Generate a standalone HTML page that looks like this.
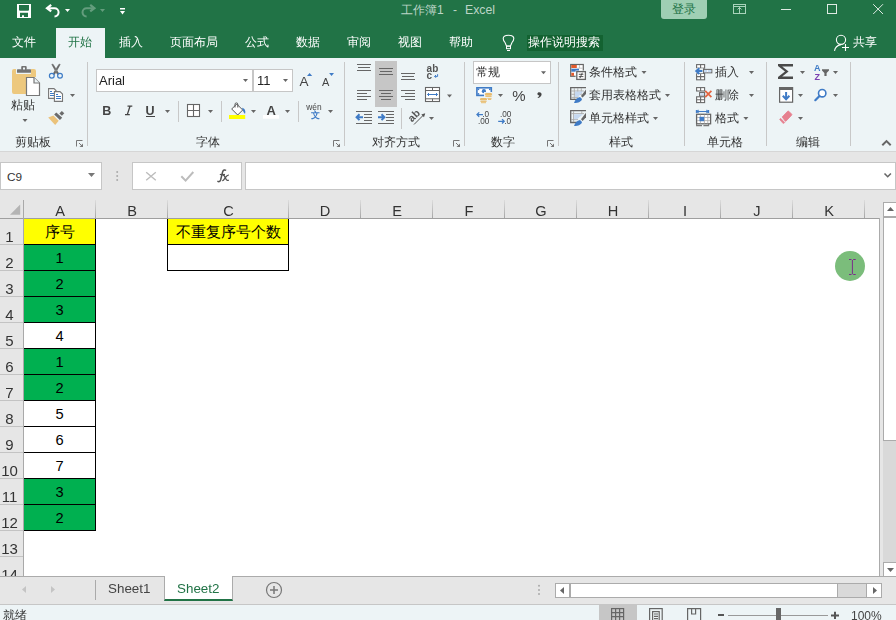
<!DOCTYPE html>
<html><head><meta charset="utf-8">
<style>
*{box-sizing:border-box;margin:0;padding:0}
html,body{width:896px;height:620px;overflow:hidden;background:#fff;font-family:"Liberation Sans",sans-serif;}
.a{position:absolute;white-space:nowrap}
svg{position:absolute;overflow:visible}
#title{left:0;top:0;width:896px;height:58px;background:#217346}
#ribbon{left:0;top:58px;width:896px;height:94px;background:#edf4f6;border-bottom:1px solid #d6d6d6}
#fbar{left:0;top:152px;width:896px;height:48px;background:#e6e6e6}
.tab{color:#fff;font-size:12px;top:35px;line-height:14px;font-weight:500;will-change:transform}
.gl{font-size:12px;color:#333;top:135px;line-height:14px;font-weight:500;will-change:transform}
.rt{font-size:12px;color:#333;line-height:14px;font-weight:500;will-change:transform}
.sep{width:1px;background:#c8c8c8}
.dd{width:0;height:0;border-left:2.5px solid transparent;border-right:2.5px solid transparent;border-top:3px solid #666}
.ch{top:202px;height:18px;font-size:14.6px;color:#333;text-align:center;line-height:18px}
.sepg{top:200px;width:1px;height:18px;background:linear-gradient(#dcdcdc,#a6a6a6)}
.rh{left:0;width:19px;font-size:15px;line-height:18px;color:#333;text-align:center}
.cell{font-size:14.67px;color:#000;text-align:center;line-height:26px}
</style></head><body>
<!-- TITLE BAR -->
<div id="title" class="a"></div>
<div class="a" style="left:56px;top:28px;width:49px;height:30px;background:#edf4f6"></div>
<div class="a tab" style="left:12px">文件</div>
<div class="a tab" style="left:68px;color:#217346">开始</div>
<div class="a tab" style="left:119px">插入</div>
<div class="a tab" style="left:170px">页面布局</div>
<div class="a tab" style="left:245px">公式</div>
<div class="a tab" style="left:296px">数据</div>
<div class="a tab" style="left:347px">审阅</div>
<div class="a tab" style="left:398px">视图</div>
<div class="a tab" style="left:449px">帮助</div>
<div class="a" style="left:527px;top:35px;width:76px;height:16px;background:#136231"></div>
<div class="a tab" style="left:528px">操作说明搜索</div>
<div class="a tab" style="left:853px">共享</div>
<div class="a" style="left:401px;top:3px;font-size:12px;line-height:14px;color:#bcd5c6">工作簿1</div>
<div class="a" style="left:453px;top:3px;font-size:12px;line-height:14px;color:#bcd5c6">-</div>
<div class="a" style="left:465px;top:3px;font-size:12.3px;line-height:14px;color:#bcd5c6">Excel</div>
<div class="a" style="left:661px;top:0;width:46px;height:19px;background:#9fcfb4;border-radius:0 0 3px 3px"></div>
<div class="a" style="left:672px;top:2px;font-size:12px;line-height:14px;color:#217346">登录</div>


<svg class="a" style="left:0;top:0" width="896" height="620" viewBox="0 0 896 620">
<!-- save -->
<rect x="17" y="4" width="14" height="14" fill="#fff"/>
<path d="M19 5 H29 V10 L28.3 10.7 H19.7 L19 10 Z" fill="#217346"/>
<path d="M20 12.7 H28 V16.9 H24 V15.2 H22 V16.9 H20 Z" fill="#217346"/>
<!-- undo -->
<path d="M51.2 4.9 L47 8.2 L51.2 11.4" fill="none" stroke="#fff" stroke-width="2.2" stroke-linejoin="miter"/>
<path d="M47.5 8.2 H54.5 A4.1 4.1 0 0 1 54.5 16.4" fill="none" stroke="#fff" stroke-width="2"/>
<path d="M65 9 H70 L67.5 12 Z" fill="#fff"/>
<!-- redo -->
<g opacity="0.3">
<path d="M90.2 4.9 L94.4 8.2 L90.2 11.4" fill="none" stroke="#fff" stroke-width="2.2"/>
<path d="M94 8.2 H86.6 A4.1 4.1 0 0 0 86.6 16.4" fill="none" stroke="#fff" stroke-width="2"/>
<path d="M100 9 H105 L102.5 12 Z" fill="#fff"/>
</g>
<!-- qat -->
<rect x="120" y="8" width="5" height="1.5" fill="#fff"/>
<path d="M120 11 H125 L122.5 14.4 Z" fill="#fff"/>
<!-- ribbon display -->
<g fill="none" stroke="#a9d4bb" stroke-width="1">
<rect x="733.5" y="4.5" width="12" height="9"/>
<path d="M733.5 6.5 H745.5 M739.5 7 V13.5 M737.5 9.5 L739.5 7.5 L741.5 9.5"/>
</g>
<!-- min max close -->
<rect x="781" y="9" width="10" height="1" fill="#dfeae3"/>
<rect x="827.5" y="4.5" width="9" height="9" fill="none" stroke="#dfeae3" stroke-width="1"/>
<path d="M873.2 4.2 L883 14 M883 4.2 L873.2 14" stroke="#dfeae3" stroke-width="1"/>
<!-- lightbulb -->
<path d="M506.5 46 L505 42.5 C503.8 41.2 503.2 39.8 503.2 38.6 C503.2 36.6 505.5 35.3 508.5 35.3 C511.5 35.3 513.8 36.6 513.8 38.6 C513.8 39.8 513.2 41.2 512 42.5 L510.5 46 Z" fill="none" stroke="#fff" stroke-width="1.1"/>
<rect x="506.5" y="46.2" width="4" height="2.5" fill="none" stroke="#fff" stroke-width="1"/>
<rect x="507" y="50" width="3" height="1" fill="#fff"/>
<!-- share person -->
<circle cx="841" cy="39.8" r="4.6" fill="none" stroke="#fff" stroke-width="1.1"/>
<path d="M834.5 50.8 C835 47.5 837.5 45.2 841 44.6" fill="none" stroke="#fff" stroke-width="1.1"/>
<path d="M842 47.5 H849 M845.5 44 V51" stroke="#fff" stroke-width="1.1"/>
</svg>

<!-- RIBBON -->
<div id="ribbon" class="a"></div>
<div class="a gl" style="left:15px">剪贴板</div>
<div class="a gl" style="left:196px">字体</div>
<div class="a gl" style="left:372px">对齐方式</div>
<div class="a gl" style="left:491px">数字</div>
<div class="a gl" style="left:609px">样式</div>
<div class="a gl" style="left:707px">单元格</div>
<div class="a gl" style="left:796px">编辑</div>
<div class="a sep" style="left:87px;top:62px;height:84px"></div>
<div class="a sep" style="left:344px;top:62px;height:84px"></div>
<div class="a sep" style="left:464px;top:62px;height:84px"></div>
<div class="a sep" style="left:558px;top:62px;height:84px"></div>
<div class="a sep" style="left:684px;top:62px;height:84px"></div>
<div class="a sep" style="left:766px;top:62px;height:84px"></div>
<div class="a sep" style="left:850px;top:62px;height:84px"></div>
<div class="a rt" style="left:11px;top:98px">粘贴</div>
<div class="a rt" style="left:589px;top:65px">条件格式</div>
<div class="a rt" style="left:589px;top:88px">套用表格格式</div>
<div class="a rt" style="left:589px;top:111px">单元格样式</div>
<div class="a rt" style="left:715px;top:65px">插入</div>
<div class="a rt" style="left:715px;top:88px">删除</div>
<div class="a rt" style="left:715px;top:111px">格式</div>
<!-- font box -->
<div class="a" style="left:96px;top:69px;width:157px;height:23px;background:#fff;border:1px solid #c6c6c6"></div>
<div class="a" style="left:253px;top:69px;width:40px;height:23px;background:#fff;border:1px solid #c6c6c6"></div>
<div class="a" style="left:99px;top:73px;font-size:13px;line-height:15px;color:#222">Arial</div>
<div class="a" style="left:257px;top:73px;font-size:13px;line-height:15px;color:#222">11</div>
<!-- number box -->
<div class="a" style="left:473px;top:61px;width:78px;height:23px;background:#fff;border:1px solid #c6c6c6"></div>
<div class="a rt" style="left:476px;top:65px">常规</div>


<svg class="a" style="left:0;top:0" width="896" height="620" viewBox="0 0 896 620">
<defs>
<path id="dd" d="M0 0 H5 L2.5 3 Z" fill="#666"/>
<g id="launch"><path d="M0.5 6.5 V0.5 H6.5" fill="none" stroke="#777" stroke-width="1"/><path d="M3 3 L6 6" stroke="#777" stroke-width="1"/><path d="M7 3.5 V7 H3.5 Z" fill="#777"/></g>
</defs>
<!-- paste -->
<path d="M14 69 H16 V74 H31 V69 H34 A2 2 0 0 1 36 71 V77 H26 V94 H14 A2 2 0 0 1 12 92 V71 A2 2 0 0 1 14 69Z" fill="#edc87e"/>
<rect x="17" y="69.2" width="14" height="3.6" rx="0.6" fill="#737373"/>
<rect x="21.2" y="66" width="5.5" height="4" rx="1" fill="#737373"/>
<rect x="23" y="67.5" width="2" height="2" fill="#edf4f6"/>
<path d="M26.5 77.5 H34 L39.5 83 V95.5 H26.5 Z" fill="#fff" stroke="#777" stroke-width="1.2"/>
<path d="M34 77.5 V83 H39.5" fill="#edf4f6" stroke="#777" stroke-width="1.2"/>
<use href="#dd" x="22.5" y="119"/>
<!-- cut -->
<path d="M51.8 64.4 L53 64.2 L58.8 73.6 L57.4 74.4 Z M60.2 64.4 L59 64.2 L53.2 73.6 L54.6 74.4 Z" fill="#666" stroke="#666" stroke-width="0.6"/>
<circle cx="51.8" cy="75.8" r="2.4" fill="none" stroke="#3d7bc6" stroke-width="1.2"/>
<circle cx="60" cy="75.8" r="2.4" fill="none" stroke="#3d7bc6" stroke-width="1.2"/>
<!-- copy -->
<path d="M48.6 88.6 H54 L56 90.6 V98.4 H48.6 Z" fill="#fff" stroke="#777" stroke-width="1.1"/>
<path d="M50 91.5 H52 M50 93.5 H54 M50 95.5 H54" stroke="#3d7bc6" stroke-width="1"/>
<path d="M54.4 91.6 H60 L62.5 94 V101.4 H54.4 Z" fill="#fff" stroke="#777" stroke-width="1.1"/>
<path d="M56 94.5 H58 M56 96.5 H61 M56 98.5 H61" stroke="#3d7bc6" stroke-width="1"/>
<use href="#dd" x="70" y="94"/>
<!-- format painter -->
<path d="M48.2 117.5 L53.4 115.4 L58.7 120.7 L55.2 125 Z" fill="#ebc27a"/>
<path d="M54.2 114.5 L56.3 112.5 L62.2 117.8 L59.9 119.9 Z" fill="#6b6b6b"/>
<path d="M59.4 113.5 L61.8 110.9 L64.3 113.2 L61.9 115.7 Z" fill="#6b6b6b"/>

<use href="#launch" x="76" y="140"/>

<!-- font group -->
<use href="#dd" x="243" y="79"/>
<use href="#dd" x="283" y="79"/>
<text x="299.4" y="85.8" font-family="Liberation Sans" font-size="13.5" fill="#444">A</text>
<path d="M307 76 L309.6 73 L312.2 76 Z" fill="#3f7bc6"/>
<text x="322" y="85.8" font-family="Liberation Sans" font-size="11" fill="#444">A</text>
<path d="M329.1 73 H334 L331.55 76 Z" fill="#3f7bc6"/>
<text x="102.3" y="115" font-family="Liberation Sans" font-size="12.5" font-weight="bold" fill="#444">B</text>
<path d="M127.5 106.2 H132.3 M125 114.6 H129.8 M130 106.2 L127.3 114.6" stroke="#444" stroke-width="1.3" fill="none"/>
<text x="145.6" y="115" font-family="Liberation Sans" font-size="12.5" font-weight="bold" fill="#444">U</text>
<rect x="146" y="116" width="9" height="1" fill="#444"/>
<use href="#dd" x="165" y="110"/>
<rect x="187.5" y="104.5" width="12" height="12" fill="#fff" stroke="#666" stroke-width="1.1"/>
<path d="M193.5 104.5 V116.5 M187.5 110.5 H199.5" stroke="#666" stroke-width="1.1"/>
<use href="#dd" x="208" y="110"/>
<!-- fill -->
<path d="M231.7 109 L236.7 104 L242.7 110 L237.7 115 Z" fill="#fff" stroke="#555" stroke-width="1"/>
<path d="M235 107.5 V104.3 A1.4 1.4 0 0 1 237.8 104.3 V107.5" fill="none" stroke="#555" stroke-width="1"/>
<path d="M242 107.8 C244.5 108.5 246 110.5 245 114 L243.5 112 Z" fill="#3f7bc6"/>
<rect x="229" y="115" width="16.2" height="4" fill="#ffff00"/>
<use href="#dd" x="251" y="110"/>
<text x="266.5" y="115" font-family="Liberation Sans" font-size="13" font-weight="bold" fill="#444">A</text>
<rect x="263" y="115" width="16" height="3.7" fill="#fff"/>
<use href="#dd" x="285" y="110"/>
<text x="306.3" y="109.6" font-family="Liberation Sans" font-size="8.4" fill="#444">wén</text>
<text x="310.6" y="118.3" font-family="Liberation Sans" font-size="8.6" font-weight="bold" fill="#3f7bc6">文</text>
<use href="#dd" x="328" y="110"/>
<use href="#launch" x="333" y="140"/>
<rect x="178" y="101" width="1" height="21" fill="#c8c8c8"/>
<rect x="221" y="101" width="1" height="21" fill="#c8c8c8"/>
<rect x="298" y="101" width="1" height="21" fill="#c8c8c8"/>

<!-- alignment -->
<rect x="375" y="61" width="22" height="46" fill="#c6c6c6"/>
<g fill="#666">
<rect x="357" y="64" width="14" height="1"/><rect x="358" y="67" width="12" height="1"/><rect x="357" y="70" width="14" height="1"/>
<rect x="379" y="68" width="14" height="1"/><rect x="380" y="71" width="12" height="1"/><rect x="379" y="74" width="14" height="1"/>
<rect x="401" y="73" width="14" height="1"/><rect x="402" y="76" width="12" height="1"/><rect x="401" y="79" width="14" height="1"/>
<rect x="357" y="90" width="14" height="1"/><rect x="357" y="93" width="10" height="1"/><rect x="357" y="96" width="14" height="1"/><rect x="357" y="99" width="10" height="1"/>
<rect x="379" y="90" width="14" height="1"/><rect x="381" y="93" width="10" height="1"/><rect x="379" y="96" width="14" height="1"/><rect x="381" y="99" width="10" height="1"/>
<rect x="401" y="90" width="14" height="1"/><rect x="405" y="93" width="10" height="1"/><rect x="401" y="96" width="14" height="1"/><rect x="405" y="99" width="10" height="1"/>
<rect x="356" y="111" width="16" height="1"/><rect x="364" y="114" width="8" height="1"/><rect x="364" y="117" width="8" height="1"/><rect x="364" y="120" width="8" height="1"/><rect x="356" y="123" width="16" height="1"/>
<rect x="378" y="111" width="16" height="1"/><rect x="386" y="114" width="8" height="1"/><rect x="386" y="117" width="8" height="1"/><rect x="386" y="120" width="8" height="1"/><rect x="378" y="123" width="16" height="1"/>
</g>
<path d="M359.5 114.3 L356.6 117.2 L359.5 120.1 M357 117.2 H363" fill="none" stroke="#3f7bc6" stroke-width="2"/>
<path d="M381.5 114.3 L384.4 117.2 L381.5 120.1 M378 117.2 H384" fill="none" stroke="#3f7bc6" stroke-width="2"/>
<text x="426.6" y="71.8" font-family="Liberation Sans" font-size="10" font-weight="bold" fill="#555">ab</text>
<text x="426.6" y="78.6" font-family="Liberation Sans" font-size="10" font-weight="bold" fill="#555">c</text>
<path d="M437.6 74.2 V76.4 H434.6 M436 75 L434.6 76.4 L436 77.8" fill="none" stroke="#3f7bc6" stroke-width="1"/>
<rect x="425.5" y="87.5" width="14" height="14" fill="#fff" stroke="#666" stroke-width="1.1"/>
<path d="M425.5 90.5 H439.5 M425.5 98.8 H439.5 M432.5 87.5 V90.5 M432.5 98.8 V101.5" stroke="#666" stroke-width="1"/>
<path d="M427.5 94.5 H437.5 M429 93 L427.5 94.5 L429 96 M436 93 L437.5 94.5 L436 96" fill="none" stroke="#3f7bc6" stroke-width="1"/>
<use href="#dd" x="447" y="94.5"/>
<rect x="401" y="108" width="1" height="21" fill="#c8c8c8"/>
<text x="0" y="0" font-family="Liberation Sans" font-size="10.5" font-weight="bold" fill="#555" transform="translate(412,122.5) rotate(-45)">ab</text>
<path d="M414 124.5 L424.5 114" stroke="#555" stroke-width="1"/>
<path d="M425.2 113.3 L421.3 114.5 L424 117.2 Z" fill="#555"/>
<use href="#dd" x="429" y="117"/>
<use href="#launch" x="453" y="140"/>

<!-- number -->
<use href="#dd" x="541" y="71.3"/>
<rect x="476.9" y="87.8" width="14.4" height="7.6" fill="#fff" stroke="#3f7bc6" stroke-width="1.6"/>
<rect x="477.6" y="88.5" width="1.6" height="1.6" fill="#3f7bc6"/><rect x="489" y="88.5" width="1.6" height="1.6" fill="#3f7bc6"/><rect x="477.6" y="93.1" width="1.6" height="1.6" fill="#3f7bc6"/>
<circle cx="483.9" cy="91.2" r="2.1" fill="#3f7bc6"/>
<path d="M484 92 H492.5 V103 H484 Z" fill="#edf4f6"/>
<g fill="#e9bd6f">
<rect x="485" y="93" width="7" height="2.7" rx="1.3"/>
<rect x="485.4" y="96" width="6.2" height="0.9"/>
<rect x="487.4" y="97.9" width="4.2" height="0.9"/>
<rect x="488" y="99.1" width="3.2" height="0.9"/>
<rect x="480" y="98" width="7" height="2.6" rx="1.3"/>
<rect x="480.4" y="101" width="6.2" height="0.9"/>
<rect x="481" y="102.2" width="5" height="1"/>
</g>
<use href="#dd" x="498" y="94"/>
<text x="512.3" y="101" font-family="Liberation Sans" font-size="15" fill="#444">%</text>
<path d="M539.2 92.2 C540.6 92.2 541.6 93 541.6 94.2 C541.6 95.9 540.2 97.4 538 98 L537.6 97.3 C538.6 96.8 539.2 96.1 539.3 95.5 C538.3 95.4 537.4 94.8 537.4 93.8 C537.4 92.9 538.2 92.2 539.2 92.2Z" fill="#444"/>
<text x="482.2" y="116.8" font-family="Liberation Sans" font-size="8.2" fill="#444">.0</text>
<text x="478" y="123.9" font-family="Liberation Sans" font-size="8.2" fill="#444">.00</text>
<path d="M477 114.6 H483 M479.2 112.4 L477 114.6 L479.2 116.8" fill="none" stroke="#3f7bc6" stroke-width="1.3"/>
<text x="500" y="116.8" font-family="Liberation Sans" font-size="8.2" fill="#444">.00</text>
<text x="504.2" y="123.9" font-family="Liberation Sans" font-size="8.2" fill="#444">.0</text>
<path d="M498.2 121.3 H504.2 M502 119.1 L504.2 121.3 L502 123.5" fill="none" stroke="#3f7bc6" stroke-width="1.3"/>
<use href="#launch" x="547" y="140"/>

<!-- styles -->
<rect x="570.7" y="64.5" width="12.6" height="11.8" fill="#fff" stroke="#666" stroke-width="1.2"/>
<rect x="571.3" y="65" width="5.5" height="3" fill="#e25a2c"/>
<rect x="571.3" y="68.7" width="7.7" height="3" fill="#3f7bc6"/>
<rect x="571.3" y="72.8" width="2.7" height="3" fill="#e25a2c"/>
<path d="M577.3 68.2 H583 M579.5 65 V68" stroke="#bbb" stroke-width="0.8"/>
<rect x="575.6" y="70.5" width="11" height="10" fill="#edf4f6"/>
<rect x="576.8" y="71.6" width="8.6" height="7.8" fill="#fff" stroke="#666" stroke-width="1.3"/>
<path d="M578.8 74.3 H583.4 M578.8 76.6 H583.4 M582.3 72.8 L579.9 78.2" stroke="#444" stroke-width="0.9"/>
<use href="#dd" x="641.5" y="71"/>
<!-- format as table -->
<path d="M586 87.7 H570.7 V99.4 H578" fill="none" stroke="#666" stroke-width="1.3"/>
<path d="M571 91 H584 M571 94.3 H582 M571 97.4 H578 M574.3 88 V99 M577.8 88 V97 M581.3 88 V93.5" stroke="#aaa" stroke-width="0.9" fill="none"/>
<path d="M575 91.5 H583 L578 97 H575 Z" fill="#c5d8f0"/>
<path d="M586 89.5 L586 94 L582.6 97.6 L581 96 Z" fill="#666"/>
<path d="M574 103 C575 100 577 97.5 580 97 L582 99 C581.5 101.5 578.5 103 574 103Z" fill="#3f7bc6"/>
<use href="#dd" x="665" y="94"/>
<!-- cell styles -->
<path d="M586 110.7 H570.7 V122.5 H578" fill="none" stroke="#666" stroke-width="1.3"/>
<path d="M571 113.6 H584 M571 119.6 H578 M573.6 111 V122 M581.8 111 V114" stroke="#aaa" stroke-width="0.9" fill="none"/>
<path d="M574.2 114.2 H583 L577 119.2 H574.2 Z" fill="#c5d8f0"/>
<path d="M586 112.8 L586 117.3 L582.6 120.9 L581 119.3 Z" fill="#666"/>
<path d="M574 126 C575 123 577 120.5 580 120 L582 122 C581.5 124.5 578.5 126 574 126Z" fill="#3f7bc6"/>
<use href="#dd" x="653" y="117"/>

<!-- cells -->
<g fill="#fff" stroke="#6a6a6a" stroke-width="1.1">
<rect x="696.6" y="64.6" width="8" height="3.6"/>
<path d="M700.6 64.6 V68.2"/>
<rect x="696.6" y="73.4" width="8" height="6.4"/>
<path d="M700.6 73.4 V79.8 M696.6 76.6 H704.6"/>
<rect x="703.4" y="69.4" width="8.4" height="3.4"/>
</g>
<rect x="704" y="70" width="3.2" height="2.2" fill="#c9dcf3"/><rect x="708" y="70" width="3.2" height="2.2" fill="#c9dcf3"/>
<rect x="695.5" y="68.3" width="7.5" height="5" fill="#edf4f6"/>
<path d="M699.4 68.3 L696.3 71.1 L699.4 73.9 M697 71.1 H702.4" fill="none" stroke="#3f7bc6" stroke-width="2"/>
<use href="#dd" x="749" y="71"/>
<g fill="#fff" stroke="#6a6a6a" stroke-width="1.1">
<rect x="696.6" y="87.6" width="8" height="3.4"/>
<path d="M700.6 87.6 V91"/>
<rect x="699.6" y="92.6" width="5" height="3.4"/>
<rect x="696.6" y="96.8" width="8" height="5.8"/>
<path d="M700.6 96.8 V102.6 M696.6 99.7 H704.6"/>
</g>
<rect x="700.2" y="93.2" width="3.8" height="2.2" fill="#c9dcf3"/>
<path d="M705.2 90.8 L711.4 97.2 M711.4 90.8 L705.2 97.2" stroke="#e2633f" stroke-width="1.7"/>
<use href="#dd" x="749" y="94"/>
<path d="M696.4 110 V113 M708.6 110 V113 M697 111.5 H708 M698.5 110 L697 111.5 L698.5 113 M706.5 110 L708 111.5 L706.5 113" fill="none" stroke="#3f7bc6" stroke-width="1.1"/>
<rect x="696.6" y="114.3" width="14" height="9.5" fill="#fff" stroke="#666" stroke-width="1.3"/>
<path d="M697 117.5 H710 M697 120.6 H710 M700.4 114.6 V123.5 M704.4 114.6 V123.5 M707.8 114.6 V123.5" stroke="#aaa" stroke-width="0.8"/>
<rect x="699.5" y="116.8" width="4.6" height="4.4" fill="#3f7bc6"/>
<path d="M696.6 123.8 V125.6 H702 M703.4 125.6 H708.6 V123.8" fill="none" stroke="#777" stroke-width="1.1"/>
<use href="#dd" x="743.4" y="117"/>

<!-- editing -->
<path d="M778 64 H793 V66.6 L792 66.6 H782.2 L788.6 71.5 L782.2 76.4 H792 L793 76.4 V79 H778 V77 L785 71.5 L778 66 Z" fill="#4a4a4a"/>
<use href="#dd" x="800" y="71"/>
<text x="814" y="70.8" font-family="Liberation Sans" font-size="9" font-weight="bold" fill="#3f7bc6">A</text>
<text x="814.4" y="80" font-family="Liberation Sans" font-size="9" font-weight="bold" fill="#7a3fb0">Z</text>
<path d="M822 69.2 H829 V70.6 L826.6 73 V76 H824.4 V73 L822 70.6 Z" fill="#666"/>
<use href="#dd" x="833" y="71"/>
<rect x="779.6" y="87.6" width="13" height="14.6" fill="#fff" stroke="#666" stroke-width="1.2"/>
<rect x="779" y="87" width="14" height="3" fill="#666"/>
<path d="M786.1 92 V99 M782.8 95.8 L786.1 99.2 L789.4 95.8" fill="none" stroke="#3f7bc6" stroke-width="2"/>
<use href="#dd" x="798" y="94"/>
<circle cx="822.2" cy="93.2" r="3.7" fill="#fff" stroke="#3f7bc6" stroke-width="1.6"/>
<path d="M819.5 96 L815.3 100.2" stroke="#3f7bc6" stroke-width="2.2" stroke-linecap="round"/>
<use href="#dd" x="833" y="94"/>
<path d="M782.2 116.9 L787.6 111.3 Q788.2 110.7 788.8 111.3 L791.6 114.1 Q792.2 114.7 791.6 115.3 L786.2 120.9 Q785.6 121.5 785 120.9 Z" fill="#e6808f" stroke="#e6808f" stroke-width="0.8" stroke-linejoin="round"/>
<path d="M779.6 119.4 L780.6 118.3 L784.8 122.5 L783.2 123.6 Z" fill="#e6808f" stroke="#e6808f" stroke-width="0.6" stroke-linejoin="round"/>
<use href="#dd" x="798" y="117"/>
<path d="M882.3 145.3 L886.5 141.1 L890.7 145.3" fill="none" stroke="#666" stroke-width="2"/>
</svg>

<!-- FORMULA BAR -->
<div id="fbar" class="a"></div>
<div class="a" style="left:0;top:162px;width:102px;height:28px;background:#fff;border:1px solid #c6c6c6"></div>
<div class="a" style="left:7px;top:170px;font-size:11.8px;line-height:15px;color:#333">C9</div>
<div class="a" style="left:132px;top:162px;width:110px;height:28px;background:#fff;border:1px solid #c6c6c6"></div>
<div class="a" style="left:245px;top:162px;width:651px;height:28px;background:#fff;border:1px solid #c6c6c6"></div>

<svg class="a" style="left:0;top:0" width="896" height="620">
<path d="M88 173 H95 L91.5 177 Z" fill="#777"/>
<circle cx="117.2" cy="172" r="1" fill="#aaa"/><circle cx="117.2" cy="176" r="1" fill="#aaa"/><circle cx="117.2" cy="180" r="1" fill="#aaa"/>
<path d="M146.2 172.2 L155.8 180.2 M155.8 172.2 L146.2 180.2" stroke="#bcbcbc" stroke-width="1.4"/>
<path d="M181.3 176.2 L185.6 180.6 L193.3 172" fill="none" stroke="#bcbcbc" stroke-width="2"/>
<path d="M226 170.6 C225 169.5 223.2 169.8 222.6 172 L220.6 180 C220.1 181.8 218.8 182 217.4 181.2" fill="none" stroke="#555" stroke-width="1.5"/>
<path d="M219.8 174.5 H225" stroke="#555" stroke-width="1.2"/>
<path d="M222.6 175.2 C223.8 175 224.5 175.8 225.1 177.2 L225.8 178.8 C226.4 180.2 227.4 180.8 228.8 180.2" fill="none" stroke="#555" stroke-width="1.3"/>
<path d="M228.8 175.2 C227.6 175 226.2 176.4 225.4 177.5 L224.6 178.7 C223.8 180 223 180.8 222.2 180.5" fill="none" stroke="#555" stroke-width="1.3"/>

<path d="M884.5 173.5 L887.7 176.7 L890.9 173.5" fill="none" stroke="#666" stroke-width="1.6"/>
</svg>
<!-- GRID HEADERS -->
<div class="a" style="left:24px;top:219px;width:855px;height:357px;background:#fff"></div>
<div class="a cell" style="left:23px;top:218px;width:73px;height:27px;background:#ffff00;border:1px solid #000">序号</div>
<div class="a cell" style="left:23px;top:244px;width:73px;height:27px;background:#00b050;border:1px solid #000">1</div>
<div class="a cell" style="left:23px;top:270px;width:73px;height:27px;background:#00b050;border:1px solid #000">2</div>
<div class="a cell" style="left:23px;top:296px;width:73px;height:27px;background:#00b050;border:1px solid #000">3</div>
<div class="a cell" style="left:23px;top:322px;width:73px;height:27px;background:#fff;border:1px solid #000">4</div>
<div class="a cell" style="left:23px;top:348px;width:73px;height:27px;background:#00b050;border:1px solid #000">1</div>
<div class="a cell" style="left:23px;top:374px;width:73px;height:27px;background:#00b050;border:1px solid #000">2</div>
<div class="a cell" style="left:23px;top:400px;width:73px;height:27px;background:#fff;border:1px solid #000">5</div>
<div class="a cell" style="left:23px;top:426px;width:73px;height:27px;background:#fff;border:1px solid #000">6</div>
<div class="a cell" style="left:23px;top:452px;width:73px;height:27px;background:#fff;border:1px solid #000">7</div>
<div class="a cell" style="left:23px;top:478px;width:73px;height:27px;background:#00b050;border:1px solid #000">3</div>
<div class="a cell" style="left:23px;top:504px;width:73px;height:27px;background:#00b050;border:1px solid #000">2</div>
<div class="a cell" style="left:167px;top:218px;width:122px;height:27px;background:#ffff00;border:1px solid #000">不重复序号个数</div>
<div class="a cell" style="left:167px;top:244px;width:122px;height:27px;background:#fff;border:1px solid #000"></div>
<div class="a" style="left:0;top:200px;width:880px;height:18px;background:#e6e6e6"></div>
<div class="a" style="left:0;top:218px;width:880px;height:1px;background:#9f9f9f"></div>
<div class="a ch" style="left:24px;width:72px">A</div>
<div class="a sepg" style="left:95px"></div>
<div class="a ch" style="left:96px;width:72px">B</div>
<div class="a sepg" style="left:167px"></div>
<div class="a ch" style="left:168px;width:121px">C</div>
<div class="a sepg" style="left:288px"></div>
<div class="a ch" style="left:289px;width:72px">D</div>
<div class="a sepg" style="left:360px"></div>
<div class="a ch" style="left:361px;width:72px">E</div>
<div class="a sepg" style="left:432px"></div>
<div class="a ch" style="left:433px;width:72px">F</div>
<div class="a sepg" style="left:504px"></div>
<div class="a ch" style="left:505px;width:72px">G</div>
<div class="a sepg" style="left:576px"></div>
<div class="a ch" style="left:577px;width:72px">H</div>
<div class="a sepg" style="left:648px"></div>
<div class="a ch" style="left:649px;width:72px">I</div>
<div class="a sepg" style="left:720px"></div>
<div class="a ch" style="left:721px;width:72px">J</div>
<div class="a sepg" style="left:792px"></div>
<div class="a ch" style="left:793px;width:72px">K</div>
<div class="a sepg" style="left:864px"></div>
<svg class="a" style="left:0;top:0" width="896" height="620"><path d="M10 214.8 H20.2 V204.5 Z" fill="#b4b4b4"/></svg>
<div class="a" style="left:0;top:219px;width:23px;height:357px;background:#e6e6e6"></div>
<div class="a" style="left:23px;top:200px;width:1px;height:376px;background:#a9a9a9"></div>
<div class="a rh" style="top:228px">1</div>
<div class="a" style="left:0;top:244px;width:23px;height:1px;background:#c3c3c3"></div>
<div class="a rh" style="top:254px">2</div>
<div class="a" style="left:0;top:270px;width:23px;height:1px;background:#c3c3c3"></div>
<div class="a rh" style="top:280px">3</div>
<div class="a" style="left:0;top:296px;width:23px;height:1px;background:#c3c3c3"></div>
<div class="a rh" style="top:306px">4</div>
<div class="a" style="left:0;top:322px;width:23px;height:1px;background:#c3c3c3"></div>
<div class="a rh" style="top:332px">5</div>
<div class="a" style="left:0;top:348px;width:23px;height:1px;background:#c3c3c3"></div>
<div class="a rh" style="top:358px">6</div>
<div class="a" style="left:0;top:374px;width:23px;height:1px;background:#c3c3c3"></div>
<div class="a rh" style="top:384px">7</div>
<div class="a" style="left:0;top:400px;width:23px;height:1px;background:#c3c3c3"></div>
<div class="a rh" style="top:410px">8</div>
<div class="a" style="left:0;top:426px;width:23px;height:1px;background:#c3c3c3"></div>
<div class="a rh" style="top:436px">9</div>
<div class="a" style="left:0;top:452px;width:23px;height:1px;background:#c3c3c3"></div>
<div class="a rh" style="top:462px">10</div>
<div class="a" style="left:0;top:478px;width:23px;height:1px;background:#c3c3c3"></div>
<div class="a rh" style="top:488px">11</div>
<div class="a" style="left:0;top:504px;width:23px;height:1px;background:#c3c3c3"></div>
<div class="a rh" style="top:514px">12</div>
<div class="a" style="left:0;top:530px;width:23px;height:1px;background:#c3c3c3"></div>
<div class="a rh" style="top:540px">13</div>
<div class="a" style="left:0;top:556px;width:23px;height:1px;background:#c3c3c3"></div>
<div class="a rh" style="top:566px">14</div>
<div class="a" style="left:879px;top:218px;width:1px;height:359px;background:#ababab"></div>
<div class="a" style="left:880px;top:200px;width:16px;height:377px;background:#e6e6e6"></div>
<svg class="a" style="left:0;top:0" width="896" height="620">
<circle cx="850" cy="266" r="15" fill="#7bbd7b"/>
<path d="M849 259.5 H851.5 M853.2 259.5 H855.7 M852.4 260 V274.2 M849 274.5 H851.5 M853.2 274.5 H855.7" stroke="#7a2d8a" stroke-width="1"/>
</svg>
<div class="a" style="left:883px;top:202px;width:13px;height:375px;background:#d9d9d9"></div>
<div class="a" style="left:883px;top:202px;width:13px;height:15px;background:#fff;border:1px solid #ababab;border-right:0"></div>
<div class="a" style="left:883px;top:217px;width:13px;height:224px;background:#fff;border:1px solid #ababab;border-right:0"></div>
<div class="a" style="left:883px;top:562px;width:13px;height:14px;background:#fff;border:1px solid #ababab;border-right:0;border-bottom:0"></div>
<svg class="a" style="left:0;top:0" width="896" height="620">
<path d="M887 211 L890.5 207 L894 211 Z" fill="#666"/>
<path d="M887 568 L890.5 572 L894 568 Z" fill="#666"/>
</svg>
<!-- STATUS / TABS -->
<div class="a" style="left:0;top:576px;width:896px;height:29px;background:#e6e6e6;border-top:1px solid #ababab;border-bottom:1px solid #c6c6c6"></div>
<div class="a" style="left:164px;top:576px;width:69px;height:25px;background:#fff;border-left:1px solid #ababab;border-right:1px solid #ababab;border-bottom:2px solid #217346"></div>
<div class="a" style="left:95px;top:580px;width:1px;height:20px;background:#aaa"></div>
<div class="a" style="left:108px;top:581px;font-size:13.4px;line-height:16px;color:#444">Sheet1</div>
<div class="a" style="left:177px;top:581px;font-size:13.4px;line-height:16px;color:#217346">Sheet2</div>
<svg class="a" style="left:0;top:0" width="896" height="620">
<path d="M26 586 V593 L22 589.5 Z" fill="#c4c4c4"/>
<path d="M51 586 V593 L55 589.5 Z" fill="#c4c4c4"/>
<circle cx="274" cy="590" r="7.5" fill="none" stroke="#777" stroke-width="1.2"/>
<path d="M270 590 H278 M274 586 V594" stroke="#777" stroke-width="1.5"/>
<circle cx="539" cy="585.7" r="1" fill="#aaa"/><circle cx="539" cy="589.9" r="1" fill="#aaa"/><circle cx="539" cy="594" r="1" fill="#aaa"/>
</svg>
<div class="a" style="left:555px;top:583px;width:327px;height:15px;background:#d9d9d9;border:1px solid #ababab"></div>
<div class="a" style="left:555px;top:583px;width:15px;height:15px;background:#fff;border:1px solid #ababab"></div>
<div class="a" style="left:570px;top:583px;width:268px;height:15px;background:#fff;border:1px solid #ababab"></div>
<div class="a" style="left:866px;top:583px;width:16px;height:15px;background:#fff;border:1px solid #ababab"></div>
<svg class="a" style="left:0;top:0" width="896" height="620">
<path d="M564 587 V594 L560 590.5 Z" fill="#666"/>
<path d="M873 587 V594 L877 590.5 Z" fill="#666"/>
</svg>
<div class="a" style="left:0;top:605px;width:896px;height:15px;background:#edf4f6"></div>
<div class="a" style="left:3px;top:608px;font-size:12px;line-height:14px;color:#333;font-weight:500;will-change:transform">就绪</div>
<div class="a" style="left:599px;top:605px;width:38px;height:15px;background:#c6c6c6"></div>
<svg class="a" style="left:0;top:0" width="896" height="620">
<g fill="none" stroke="#666" stroke-width="1.2">
<rect x="611.6" y="608.6" width="12" height="14"/>
<path d="M615.6 608.6 V622 M619.6 608.6 V622 M611.6 612.6 H623.6 M611.6 616.6 H623.6"/>
<rect x="649.6" y="608.6" width="12.6" height="14"/>
<rect x="652.6" y="611.6" width="6.6" height="10"/>
<path d="M654 614 H658 M654 616.3 H658 M654 618.6 H658"/>
<path d="M687.6 622 V608.6 H700.6 V622 M691.6 608.6 V614 H695.6 V608.6"/>
</g>
<rect x="718" y="614" width="6" height="2" fill="#555"/>
<rect x="728" y="615" width="100" height="1" fill="#999"/>
<rect x="776" y="608" width="5" height="12" fill="#666"/>
<path d="M831 615.5 H839 M835 611.8 V619" stroke="#555" stroke-width="2"/>
</svg>
<div class="a" style="left:851px;top:609px;font-size:12px;line-height:14px;color:#444">100%</div>
</body></html>
